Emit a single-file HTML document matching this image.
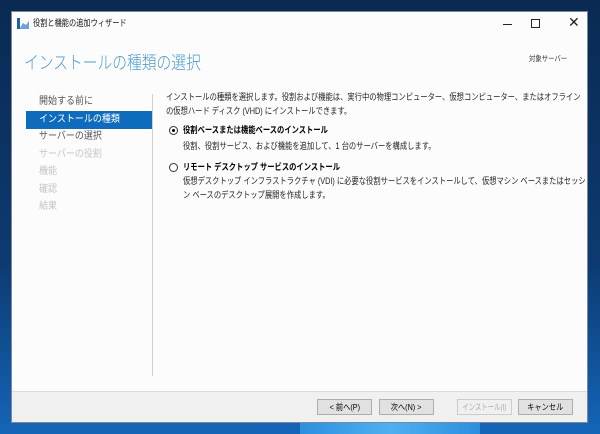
<!DOCTYPE html>
<html><head><meta charset="utf-8"><style>
*{margin:0;padding:0;box-sizing:border-box}
body{width:600px;height:434px;overflow:hidden;position:relative;font-family:"Liberation Sans","Noto Sans CJK JP",sans-serif;
background:linear-gradient(180deg,#0a2a52 0%,#0c3a70 60%,#1465b8 100%);}
.glow{position:absolute;left:300px;top:380px;width:180px;height:54px;background:linear-gradient(90deg,#2b8fe0,#4fb0f0,#2b8fe0);}
.win{position:absolute;left:11px;top:11px;width:577px;height:412px;background:#fcfcfc;border:1px solid #7a8a9a;overflow:hidden}
.t{position:absolute;white-space:nowrap;line-height:1;transform-origin:0 0}
.foot{position:absolute;left:0;top:379px;width:575px;height:31px;background:#f0f0f0;border-top:1px solid #dcdcdc}
.btn{position:absolute;top:387px;height:16px;border:1px solid #adadad;background:#e1e1e1;font-size:8.5px;text-align:center;line-height:14px;color:#000;white-space:nowrap;overflow:hidden}
.btn span{display:inline-block;transform:scaleX(.85)}
.nav{font-size:10px;color:#555;transform:scaleX(.9)}
.dis{color:#c4c4c4}
.d{font-size:9px;color:#222;transform:scaleX(.81)}
</style></head><body>
<div class="glow"></div>
<div class="win">
  <svg style="position:absolute;left:5px;top:6px" width="12" height="11"><rect x="0" y="0" width="3" height="11" fill="#1e5fa8"/><path d="M3 10 L6 5 L9 7 L12 3 L12 11 L3 11Z" fill="#6aa3d8"/></svg>
  <div class="t" style="left:21px;top:7px;font-size:9px;color:#111;transform:scaleX(.8)">役割と機能の追加ウィザード</div>
  <div style="position:absolute;left:491px;top:12px;width:9px;height:1px;background:#222"></div>
  <div style="position:absolute;left:519px;top:7px;width:9px;height:9px;border:1px solid #222"></div>
  <div class="t" style="left:556px;top:3px;font-size:14px;color:#222">✕</div>
  <div class="t" style="left:12px;top:42px;font-size:18px;font-weight:300;color:#4f9ccc;transform:scaleX(.82)">インストールの種類の選択</div>
  <div class="t" style="left:517px;top:43px;font-size:7.5px;color:#333;transform:scaleX(.85)">対象サーバー</div>
  <div style="position:absolute;left:140px;top:82px;width:1px;height:282px;background:#d0d0d0"></div>
  <div class="t nav" style="left:27px;top:85px">開始する前に</div>
  <div style="position:absolute;left:14px;top:99px;width:126px;height:18px;background:#0f6cbd"></div>
  <div class="t nav" style="left:27px;top:103px;color:#fff">インストールの種類</div>
  <div class="t nav" style="left:27px;top:120px">サーバーの選択</div>
  <div class="t nav dis" style="left:27px;top:138px">サーバーの役割</div>
  <div class="t nav dis" style="left:27px;top:155px">機能</div>
  <div class="t nav dis" style="left:27px;top:173px">確認</div>
  <div class="t nav dis" style="left:27px;top:190px">結果</div>
  <div class="t d" style="left:154px;top:81px">インストールの種類を選択します。役割および機能は、実行中の物理コンピューター、仮想コンピューター、またはオフライン</div>
  <div class="t d" style="left:154px;top:95px">の仮想ハード ディスク (VHD) にインストールできます。</div>
  <div style="position:absolute;left:157px;top:114px;width:9px;height:9px;border:1px solid #333;border-radius:50%;background:#fff"><div style="position:absolute;left:2px;top:2px;width:3px;height:3px;border-radius:50%;background:#000"></div></div>
  <div class="t d" style="left:171px;top:114px;font-weight:bold;color:#000">役割ベースまたは機能ベースのインストール</div>
  <div class="t d" style="left:171px;top:130px">役割、役割サービス、および機能を追加して、1 台のサーバーを構成します。</div>
  <div style="position:absolute;left:157px;top:151px;width:9px;height:9px;border:1px solid #333;border-radius:50%;background:#fff"></div>
  <div class="t d" style="left:171px;top:151px;font-weight:bold;color:#000">リモート デスクトップ サービスのインストール</div>
  <div class="t d" style="left:171px;top:165px">仮想デスクトップ インフラストラクチャ (VDI) に必要な役割サービスをインストールして、仮想マシン ベースまたはセッショ</div>
  <div class="t d" style="left:171px;top:179px">ン ベースのデスクトップ展開を作成します。</div>
  <div class="foot"></div>
</div>
<div class="btn" style="left:317px;top:399px;width:55px"><span>&lt; 前へ(P)</span></div>
<div class="btn" style="left:379px;top:399px;width:55px"><span>次へ(N) &gt;</span></div>
<div class="btn" style="left:457px;top:399px;width:55px;color:#aaa;background:#f0f0f0;border-color:#ccc"><span style="transform:scaleX(.75);margin-left:-6px;margin-right:-6px">インストール(I)</span></div>
<div class="btn" style="left:518px;top:399px;width:55px"><span>キャンセル</span></div>
</body></html>
